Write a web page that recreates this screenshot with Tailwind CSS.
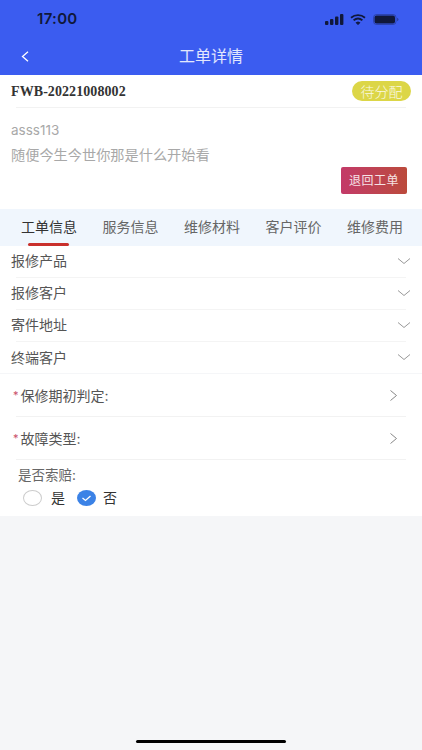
<!DOCTYPE html>
<html lang="zh">
<head>
  <meta charset="UTF-8" />
  <meta name="viewport" content="width=device-width, initial-scale=1.0"/>
  <title>工单详情</title>
  <script src="https://cdn.jsdelivr.net/npm/@tailwindcss/browser@4"></script>
</head>
<body class="bg-[#f5f6f8] text-[#555] font-['Inter','Noto_Sans_CJK_SC',sans-serif]">
<div class="relative h-[750px] w-[422px] overflow-hidden">

  <!-- Header -->
  <header class="h-[75px] bg-[#3b5cf0]">
    <div class="flex h-[37px] items-center justify-between pl-[37px] pr-[23px] pt-[1px]">
      <span class="text-[15px] font-semibold tracking-[0.3px] text-[#10183a]">17:00</span>
      <div class="flex items-center gap-[6px]">
        <svg width="19" height="11" viewBox="0 0 19 11" fill="#10183a"><rect x="0" y="7" width="3.4" height="4" rx="1"/><rect x="5" y="5" width="3.4" height="6" rx="1"/><rect x="10" y="2.5" width="3.4" height="8.5" rx="1"/><rect x="15" y="0" width="3.4" height="11" rx="1"/></svg>
        <svg width="16" height="11" viewBox="0 0 16 11" fill="none" stroke="#10183a"><path d="M1 3.8C5 .3 11 .3 15 3.8" stroke-width="1.8"/><path d="M3.6 6.3c2.6-2.1 6.2-2.1 8.8 0" stroke-width="1.8"/><path d="M6.2 8.7c1-.8 2.6-.8 3.6 0L8 10.6z" fill="#10183a" stroke-width="1"/></svg>
        <svg class="ml-[1px]" width="26" height="11" viewBox="0 0 26 11" fill="none"><rect x=".5" y=".5" width="22.5" height="10" rx="3" stroke="#10183a" stroke-opacity=".35"/><rect x="1.5" y="1.5" width="20.5" height="8" rx="2" fill="#10183a"/><path d="M24.2 3.8c.8.3 1.2.9 1.2 1.7s-.4 1.4-1.2 1.7z" fill="#10183a" fill-opacity=".5"/></svg>
      </div>
    </div>
    <div class="relative flex h-[38px] items-center justify-center">
      <svg class="absolute left-[21px] top-[14px]" width="8" height="11" viewBox="0 0 8 11" fill="none" stroke="#fff" stroke-width="1.3"><path d="M7 .8 1.5 5.5 7 10.2"/></svg>
      <h1 class="text-[16px] text-white/85">工单详情</h1>
    </div>
  </header>

  <!-- Order summary -->
  <section class="h-[134px] bg-white">
    <div class="mx-[16px] flex h-[33px] items-center justify-between border-b border-[#f2f2f2]">
      <span class="-ml-[5px] font-['Liberation_Serif',serif] text-[14px] font-bold tracking-[0.08px] text-[#333]">FWB-20221008002</span>
      <span class="-mr-[5px] flex h-[20px] w-[59px] items-center justify-center rounded-full bg-[#dcd647] text-[14px] font-light text-white/85">待分配</span>
    </div>
    <p class="pl-[11px] pt-[13px] text-[13.5px] leading-[18px] text-[#a8a8a8]">asss113</p>
    <p class="pl-[11px] pt-[6px] text-[14.2px] leading-[20px] text-[#a8a8a8]">随便今生今世你那是什么开始看</p>
    <div class="flex justify-end pr-[15px] pt-[2px]">
      <button class="h-[27px] w-[66px] rounded-[2px] bg-gradient-to-r from-[#c33a68] to-[#bb4a3b] text-[12px] tracking-[0.5px] text-white/85">退回工单</button>
    </div>
  </section>

  <!-- Tabs -->
  <nav class="flex h-[37px] justify-center bg-[#f0f6fd] pl-[2px] text-[14px]">
    <a class="relative flex w-[81.5px] items-center justify-center pb-[2px] text-[#333]">工单信息<span class="absolute bottom-0 left-[20px] h-[3px] w-[41px] rounded-[2px] bg-[#c9302c]"></span></a>
    <a class="flex w-[81.5px] items-center justify-center pb-[2px] text-[#666]">服务信息</a>
    <a class="flex w-[81.5px] items-center justify-center pb-[2px] text-[#666]">维修材料</a>
    <a class="flex w-[81.5px] items-center justify-center pb-[2px] text-[#666]">客户评价</a>
    <a class="flex w-[81.5px] items-center justify-center pb-[2px] text-[#666]">维修费用</a>
  </nav>

  <!-- Collapsible rows -->
  <section class="bg-white text-[14px]">
    <div class="mx-[16px] flex h-[32px] items-center justify-between border-b border-[#f4f4f4] pb-[2px]">
      <span class="-ml-[5px]">报修产品</span>
      <svg class="-mr-[5px]" width="14" height="8" viewBox="0 0 14 8" fill="none" stroke="#999"><path d="M1 1.5 7 6.5 13 1.5"/></svg>
    </div>
    <div class="mx-[16px] flex h-[32px] items-center justify-between border-b border-[#f4f4f4] pb-[2px]">
      <span class="-ml-[5px]">报修客户</span>
      <svg class="-mr-[5px]" width="14" height="8" viewBox="0 0 14 8" fill="none" stroke="#999"><path d="M1 1.5 7 6.5 13 1.5"/></svg>
    </div>
    <div class="mx-[16px] flex h-[32px] items-center justify-between border-b border-[#f4f4f4] pb-[2px]">
      <span class="-ml-[5px]">寄件地址</span>
      <svg class="-mr-[5px]" width="14" height="8" viewBox="0 0 14 8" fill="none" stroke="#999"><path d="M1 1.5 7 6.5 13 1.5"/></svg>
    </div>
    <div class="mx-[16px] flex h-[31px] items-center justify-between pb-[1px]">
      <span class="-ml-[5px]">终端客户</span>
      <svg class="-mr-[5px]" width="14" height="8" viewBox="0 0 14 8" fill="none" stroke="#999"><path d="M1 1.5 7 6.5 13 1.5"/></svg>
    </div>
  </section>
  <div class="h-[1px] bg-[#f5f6f8]"></div>

  <!-- Form -->
  <section class="h-[142px] bg-white text-[14px]">
    <div class="mx-[16px] flex h-[43px] items-center justify-between border-b border-[#f2f2f2]">
      <span class="-ml-[3px] flex items-center"><span class="mr-[2px] text-[11px] text-[#c9506a]">*</span>保修期初判定:</span>
      <svg class="mr-[8px]" width="9" height="13" viewBox="0 0 9 13" fill="none" stroke="#888"><path d="M1.5 1.5 7.5 6.5 1.5 11.5"/></svg>
    </div>
    <div class="mx-[16px] flex h-[43px] items-center justify-between border-b border-[#f2f2f2]">
      <span class="-ml-[3px] flex items-center"><span class="mr-[2px] text-[11px] text-[#c9506a]">*</span>故障类型:</span>
      <svg class="mr-[8px]" width="9" height="13" viewBox="0 0 9 13" fill="none" stroke="#888"><path d="M1.5 1.5 7.5 6.5 1.5 11.5"/></svg>
    </div>
    <p class="pl-[18px] pt-[5px] text-[13.5px] leading-[20px] text-[#666]">是否索赔:</p>
    <div class="flex items-center pl-[23px] pt-[2px] text-[#333]">
      <span class="h-[16px] w-[19px] rounded-[50%] border border-[#ccc] bg-white"></span>
      <span class="ml-[9px]">是</span>
      <svg class="ml-[12px]" width="19" height="16" viewBox="0 0 19 16"><ellipse cx="9.5" cy="8" rx="9.5" ry="8" fill="#3b82e6"/><path d="M5.5 8 8.5 10.5 13.5 6" fill="none" stroke="#fff" stroke-width="1.3"/></svg>
      <span class="ml-[7px]">否</span>
    </div>
  </section>

  <!-- Home indicator -->
  <div class="absolute bottom-[7px] left-[136px] h-[3px] w-[150px] rounded-full bg-black"></div>
</div>
</body>
</html>
